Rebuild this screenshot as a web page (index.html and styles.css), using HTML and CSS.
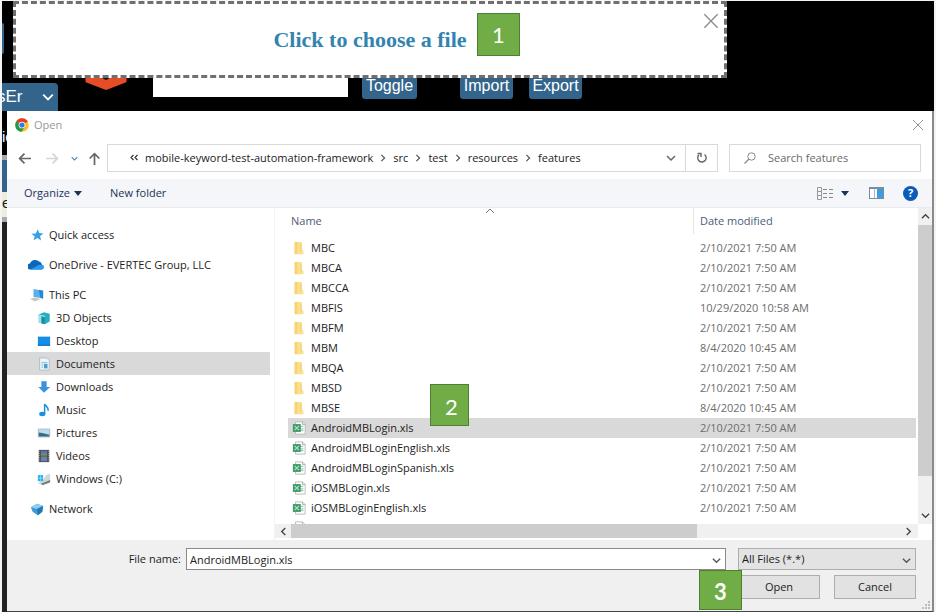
FILE: index.html
```html
<!DOCTYPE html>
<html lang="en">
<head>
<meta charset="utf-8">
<title>Open</title>
<link rel="stylesheet" href="styles.css">
</head>
<body>
<svg class="sprite" aria-hidden="true">
  <symbol id="chev" viewBox="0 0 10 10"><path d="M1 3l4 4 4-4" fill="none" stroke="currentColor" stroke-width="1.5"/></symbol>
  <symbol id="caret" viewBox="0 0 8 5"><path d="M0 0h8L4 5z" fill="currentColor"/></symbol>
  <symbol id="cross" viewBox="0 0 12 12"><path d="M1 1l10 10M11 1L1 11" fill="none" stroke="currentColor"/></symbol>
  <symbol id="arrow" viewBox="0 0 12 12"><path d="M12 6H1.5M6 1.5L1.5 6 6 10.500" fill="none" stroke="currentColor" stroke-width="1.600"/></symbol>
  <symbol id="folder" viewBox="0 0 16 16"><path d="M3 1h8v9l2 1v4H3z" fill="#fadf8c"/><path d="M3 1h3v14H3z" fill="#f7d375"/><path d="M10 3h1v8l-1 1z" fill="#eec763"/></symbol>
  <symbol id="xls" viewBox="0 0 16 16"><path d="M4 1h8l3 3v11H4z" fill="#fff" stroke="#b4b8b6"/><path d="M12 1v3h3" fill="none" stroke="#a9adab"/><path d="M9 6h4M9 9h4M9 11h4" stroke="#6dba91"/><rect x="1" y="3.500" width="9" height="9" fill="#3f9a6b"/><path d="M3 5.500l5 5M8 5.500l-5 5" stroke="#b5dfc8" stroke-width="1.400"/></symbol>
</svg>

<div class="screen">
  <header class="app">
    <span class="sliver"></span>
    <div class="toolbar">
      <label class="env"><select aria-label="Environment"><option>sEr</option></select><svg><use href="#chev"/></svg></label>
      <svg class="logo" viewBox="0 0 46 30"><path d="M0 0h46l-2 22-21 8L2 22z" fill="#e44d26"/><path d="M20 17q3 3 6 0" stroke="#111" stroke-width="2" fill="none"/></svg>
      <input class="query" aria-label="Query">
      <button class="tool toggle">Toggle</button>
      <button class="tool import">Import</button>
      <button class="tool export">Export</button>
    </div>
    <div class="dropzone">
      <a href="#choose">Click to choose a file</a>
      <span class="badge one">1</span>
      <button class="close" aria-label="Close upload"><svg><use href="#cross"/></svg></button>
    </div>
  </header>

  <div class="lower">
    <aside class="strip"><span class="s-text">ie</span><span class="s-gray"></span><span class="s-blue"></span><span class="s-cell">ep</span><span class="s-gray"></span></aside>
    <section class="dialog">
      <div class="titlebar">
        <svg class="chrome" viewBox="0 0 28 28"><circle cx="14" cy="14" r="13.500" fill="#fbc116"/><path d="M14 14L2.300 7.200A13.500 13.500 0 0 1 25.700 7.200z" fill="#e33b2e"/><path d="M2.300 7.200A13.500 13.500 0 0 0 13 27.500L20 17.500 14 14z" fill="#229a4b"/><circle cx="14" cy="14" r="6.700" fill="#fff"/><circle cx="14" cy="14" r="5.200" fill="#3779e4"/></svg>
        <span>Open</span>
        <button class="close" aria-label="Close"><svg><use href="#cross"/></svg></button>
      </div>

      <div class="navrow">
        <button class="nav" aria-label="Back"><svg><use href="#arrow"/></svg></button>
        <button class="nav off" aria-label="Forward"><svg class="flip"><use href="#arrow"/></svg></button>
        <button class="nav recent" aria-label="Recent"><svg><use href="#chev"/></svg></button>
        <button class="nav" aria-label="Up"><svg class="up"><use href="#arrow"/></svg></button>
        <nav class="address">
          <svg class="dbl" viewBox="0 0 8 8"><path d="M3.500 1L1 3.500 3.500 6M7.500 1L5 3.500 7.500 6" fill="none" stroke="#333" stroke-width="1.200"/></svg>
          <a href="#p1">mobile-keyword-test-automation-framework</a><svg class="sep"><use href="#chev"/></svg>
          <a href="#p2">src</a><svg class="sep"><use href="#chev"/></svg>
          <a href="#p3">test</a><svg class="sep"><use href="#chev"/></svg>
          <a href="#p4">resources</a><svg class="sep"><use href="#chev"/></svg>
          <a href="#p5">features</a>
          <button class="drop" aria-label="Previous locations"><svg><use href="#chev"/></svg></button>
          <button class="refresh" aria-label="Refresh"><svg viewBox="0 0 12 12"><path d="M3 2.800A4.200 4.200 0 1 0 8.500 2.500" fill="none" stroke="#666" stroke-width="1.400"/><path d="M1.500 1.500h3.500v3.500" fill="none" stroke="#666" stroke-width="1.400"/></svg></button>
        </nav>
        <label class="search"><svg viewBox="0 0 12 12"><circle cx="7.500" cy="4.500" r="3.700" fill="none" stroke="#888"/><path d="M5 7L.5 11.500" stroke="#888" stroke-width="1.300"/></svg><input type="text" placeholder="Search features" aria-label="Search features"></label>
      </div>

      <div class="commands">
        <button>Organize <svg class="caret"><use href="#caret"/></svg></button>
        <button>New folder</button>
        <button class="views" aria-label="Change view"><svg class="list" viewBox="0 0 17 13"><g fill="none" stroke="#999"><path d="M.5.5h4v12h-4zM.5 4.500h4M.5 8.500h4"/><path d="M6 2.500h4M12 2.500h4M6 6.500h4M12 6.500h4M6 10.500h4M12 10.500h4" stroke="#888"/></g></svg><svg class="caret"><use href="#caret"/></svg></button>
        <button class="preview" aria-label="Preview pane"><svg viewBox="0 0 15 12"><rect x=".5" y=".5" width="14" height="11" fill="#fff" stroke="#7d8c9a"/><path d="M1 1.500h13" stroke="#7d8c9a"/><path d="M5.500 2v9" stroke="#a9bccb"/><path d="M8 2h6v9H8z" fill="#3d9be0"/></svg></button>
        <button class="help" aria-label="Help">?</button>
      </div>

      <div class="body">
        <ul class="tree">
          <li><svg viewBox="0 0 16 16"><path d="M9 1.500l1.500 4.300 5 .4-4 3 1.200 5L8.500 11.500 4 14l1.300-4.600L1.500 6.500l5-.3z" fill="#3aa0e6"/></svg>Quick access</li>
          <li class="gap"><svg class="cloud" viewBox="0 2 16 13"><path d="M2.500 13.500A3 3 0 0 1 2 7.500a5.500 5.500 0 0 1 9-2 4 4 0 0 1 3 3.200 2.500 2.500 0 0 1-.5 4.800z" fill="#0d66bd"/><path d="M2.500 13.500L11 8.700l3.500.2a2.400 2.400 0 0 1-.8 4.600z" fill="#2a9be6"/></svg>OneDrive - EVERTEC Group, LLC</li>
          <li class="gap"><svg viewBox="0 0 16 16"><path d="M4 1l11 2v9L4 10z" fill="#58b0ee"/><path d="M10 2.100l5 .9v9l-3-.5z" fill="#2b86d0"/><path d="M0 12.500l6-2 6 2-6 3z" fill="#cbc8c0"/></svg>This PC</li>
          <li class="sub"><svg viewBox="0 0 16 16"><path d="M2 4l6-2.500L14.500 3v9L9 15l-7-2z" fill="#25aec0"/><path d="M2 4l7 1.500V15l-7-2z" fill="#9ce3ea"/><path d="M5 6l4 1v8l-4-1z" fill="#188b9f"/></svg>3D Objects</li>
          <li class="sub"><svg viewBox="0 0 16 16"><path d="M1 3h14v10.500H1z" fill="#168de5"/><path d="M1 12h14v1.500H1z" fill="#0c78cc"/></svg>Desktop</li>
          <li class="sub selected"><svg viewBox="0 0 16 16"><path d="M3 1h8l3 3v11H3z" fill="#eef5fa" stroke="#a4bdca"/><path d="M5 6.500h7M5 9h2M5 11.500h2" stroke="#70a9c7"/><path d="M8 8h4v5H8z" fill="#4a9ec6"/></svg>Documents</li>
          <li class="sub"><svg viewBox="0 0 16 16"><path d="M5 1.500h6V8h4l-7 6.500L1.500 8H5z" fill="#3c92dd"/></svg>Downloads</li>
          <li class="sub"><svg viewBox="0 0 16 16"><ellipse cx="6" cy="12.500" rx="3.500" ry="2.500" fill="#1591e4"/><path d="M8.700 12.500V1c1 3 5 3 4 8" fill="none" stroke="#1591e4" stroke-width="1.700"/></svg>Music</li>
          <li class="sub"><svg viewBox="0 0 16 16"><path d="M1.500 3.500h13v9h-13z" fill="#b9def2" stroke="#aab6bd"/><path d="M2 7.500l4 .5 8 2v2H2z" fill="#376d80"/></svg>Pictures</li>
          <li class="sub"><svg viewBox="0 0 16 16"><path d="M2 1h12v14H2z" fill="#4d4d50"/><path d="M4.500 2h7v5.500h-7z" fill="#4f74b8"/><path d="M4.500 8.500h7V14h-7z" fill="#6583a8"/><path d="M4.500 5h7v2.500h-7z" fill="#8b8853"/><path d="M3 2v13M13 2v13" stroke="#aaa" stroke-dasharray="1 1.500"/></svg>Videos</li>
          <li class="sub"><svg viewBox="0 0 16 16"><path d="M6 10l5-7 4-1v9l-9 4-5-2z" fill="#d3d6d7"/><path d="M5 13l10-4v3l-9 3z" fill="#777d80"/><path d="M1 3.500h6v7H1z" fill="#26b3ee"/><path d="M4 3v8M1 7h6" stroke="#7fd5f7"/></svg>Windows (C:)</li>
          <li class="gap"><svg viewBox="0 0 16 16"><path d="M1 6l7-4 7 2.500-1 6.500-5 4-6-4z" fill="#3a9bd6"/><path d="M1 6l7 2 7-3.500L8 2z" fill="#8dcdef"/><path d="M8 8l1 7 5-4 1-6.500z" fill="#2177b4"/></svg>Network</li>
        </ul>

        <div class="files">
          <div class="view">
            <svg class="sort" viewBox="0 0 10 10"><path d="M1 7l4-4 4 4" fill="none" stroke="#777"/></svg>
            <table>
              <thead><tr><th class="name">Name</th><th><span>Date modified</span></th></tr></thead>
              <tbody>
                <tr><td><svg><use href="#folder"/></svg>MBC</td><td>2/10/2021 7:50 AM</td></tr>
                <tr><td><svg><use href="#folder"/></svg>MBCA</td><td>2/10/2021 7:50 AM</td></tr>
                <tr><td><svg><use href="#folder"/></svg>MBCCA</td><td>2/10/2021 7:50 AM</td></tr>
                <tr><td><svg><use href="#folder"/></svg>MBFIS</td><td>10/29/2020 10:58 AM</td></tr>
                <tr><td><svg><use href="#folder"/></svg>MBFM</td><td>2/10/2021 7:50 AM</td></tr>
                <tr><td><svg><use href="#folder"/></svg>MBM</td><td>8/4/2020 10:45 AM</td></tr>
                <tr><td><svg><use href="#folder"/></svg>MBQA</td><td>2/10/2021 7:50 AM</td></tr>
                <tr><td><svg><use href="#folder"/></svg>MBSD</td><td>2/10/2021 7:50 AM</td></tr>
                <tr><td><svg><use href="#folder"/></svg>MBSE</td><td>8/4/2020 10:45 AM</td></tr>
                <tr class="selected"><td><svg><use href="#xls"/></svg>AndroidMBLogin.xls<span class="badge two">2</span></td><td>2/10/2021 7:50 AM</td></tr>
                <tr><td><svg><use href="#xls"/></svg>AndroidMBLoginEnglish.xls</td><td>2/10/2021 7:50 AM</td></tr>
                <tr><td><svg><use href="#xls"/></svg>AndroidMBLoginSpanish.xls</td><td>2/10/2021 7:50 AM</td></tr>
                <tr><td><svg><use href="#xls"/></svg>iOSMBLogin.xls</td><td>2/10/2021 7:50 AM</td></tr>
                <tr><td><svg><use href="#xls"/></svg>iOSMBLoginEnglish.xls</td><td>2/10/2021 7:50 AM</td></tr>
                <tr><td><svg><use href="#xls"/></svg></td><td></td></tr>
              </tbody>
            </table>
          </div>
          <div class="vscroll"><svg class="turn"><use href="#chev"/></svg><span class="thumb"></span><svg><use href="#chev"/></svg></div>
          <div class="hscroll"><svg class="left"><use href="#chev"/></svg><span class="thumb"></span><svg class="right"><use href="#chev"/></svg></div>
        </div>
      </div>

      <footer class="footer">
        <label class="fname" for="fname">File name:</label>
        <div class="combo"><input id="fname" type="text" value="AndroidMBLogin.xls"><svg><use href="#chev"/></svg></div>
        <div class="combo type"><select aria-label="File type"><option>All Files (*.*)</option></select><svg><use href="#chev"/></svg></div>
        <div class="actions"><span class="badge three">3</span><button>Open</button><button>Cancel</button></div>
        <svg class="grip" viewBox="0 0 9 9"><path d="M6 0h2v2H6zM3 3h2v2H3zM6 3h2v2H6zM0 6h2v2H0zM3 6h2v2H3zM6 6h2v2H6z" fill="#bbb"/></svg>
      </footer>
    </section>
  </div>
</div>
</body>
</html>
```
FILE: styles.css
```css
* { box-sizing: border-box; }
body { margin: 0; background: #f4f4f4; color: #1c1c1c; font: 11px/16px "Open Sans", "Noto Sans", sans-serif; }
button, input, select { font: inherit; color: inherit; margin: 0; padding: 0; border: 0; background: none; border-radius: 0; }
input, select { appearance: none; outline: 0; min-width: 0; }
a { color: inherit; text-decoration: none; }
svg { display: block; flex: none; }
.sprite { position: absolute; width: 0; height: 0; }
.screen { margin: 1px 2px 0; background: #000; overflow: hidden; }

/* Page behind the dialog */
.app { position: relative; height: 110px; overflow: hidden; }
.sliver { position: absolute; left: 0; top: 22px; width: 2px; height: 31px; background: #33658c; border-radius: 0 3px 3px 0; }
.toolbar { display: flex; align-items: flex-start; padding-top: 60px; font: 17px/24px "Liberation Sans", sans-serif; color: #fff; }
.env { display: flex; align-items: center; width: 56px; height: 28px; margin-top: 22px; margin-right: 25px; background: #33658c; border-radius: 0 4px 0 0; }
.env select { flex: 1; text-indent: -5px; height: 28px; }
.env svg { width: 12px; height: 12px; margin-right: 4px; stroke-width: 2; }
.logo { width: 46px; height: 29px; margin-right: 24px; }
.query { width: 195px; height: 36px; margin-right: 14px; background: #fff; }
.tool { height: 38px; padding-top: 12px; font-size: 16px; line-height: 24px; background: #33658c; border-radius: 3px; }
.toggle { width: 55px; margin-right: 43px; }
.import { width: 53px; margin-right: 16px; }
.export { width: 53px; }
.dropzone { position: absolute; left: 11px; top: 0; width: 77%; max-width: 714px; height: 77px; display: flex; align-items: center; justify-content: center; background: #fff; border: 3px dashed #707070; }
.dropzone a { color: #3284b0; font: bold 22px/24px "Liberation Serif", serif; }
.close { position: absolute; color: #999; }
.dropzone .close { right: 5px; top: 9px; color: #8c8c8c; }
.dropzone .close svg { width: 16px; height: 16px; }
.badge { display: flex; align-items: center; justify-content: center; background: #70ad47; border: 1px solid #507e32; color: #fff; font: 22px/26px Lato, "Open Sans", sans-serif; }
.one { position: absolute; left: 461px; top: 9px; width: 43px; height: 43px; }

.lower { display: flex; }
.strip { width: 5px; overflow: hidden; background: #222; display: flex; flex-direction: column; color: #fff; font: 15px/16px "Liberation Sans", sans-serif; }
.s-text { background: #000; height: 44px; padding-top: 18px; }
.s-gray { height: 5px; background: #aaa; }
.s-blue { height: 32px; background: #33658c; }
.s-cell { height: 25px; padding-top: 3px; background: #eeeedd; color: #222; }
.dialog { flex: 1; min-width: 0; background: #fff; border-right: 2px solid #8a8a8a; border-bottom: 1px solid #444; }

.titlebar { position: relative; display: flex; align-items: center; height: 28px; padding-left: 8px; gap: 5px; color: #999; }
.chrome { width: 14px; height: 14px; }
.titlebar .close { right: 8px; top: 8px; }
.titlebar .close svg { width: 12px; height: 12px; }

.navrow { display: flex; align-items: center; padding: 5px 11px 7px 11px; }
.nav { width: 14px; margin-right: 14px; color: #666; }
.nav svg { width: 13px; height: 13px; }
.nav.off { margin-right: 11px; color: #d5d5d5; }
.nav.recent { margin-right: 7px; width: 10px; color: #4a83b5; }
.nav.recent svg { width: 7px; height: 7px; }
.nav.recent + .nav { margin-right: 5px; }
.flip { transform: rotate(180deg); }
.up { transform: rotate(90deg); }
.address { flex: 1; display: flex; align-items: center; height: 28px; border: 1px solid #d9d9d9; padding-left: 22px; }
.dbl { width: 8px; height: 8px; margin-right: 7px; }
.sep { width: 8px; height: 8px; margin: 0 6px; color: #555; transform: rotate(-90deg); }
.drop { margin-left: auto; padding: 0 9px; color: #666; }
.drop svg { width: 10px; height: 10px; }
.refresh { align-self: stretch; width: 32px; padding-left: 10px; border-left: 1px solid #d9d9d9; }
.refresh svg { width: 12px; height: 12px; }
.search { display: flex; align-items: center; width: 192px; height: 28px; margin-left: 11px; padding-left: 14px; gap: 12px; border: 1px solid #d9d9d9; }
.search svg { width: 12px; height: 12px; }
.search input { flex: 1; }
.search input::placeholder { color: #6b6b6b; opacity: 1; }

.commands { display: flex; align-items: center; height: 29px; padding: 0 14px 0 17px; background: #f4f6f9; border-bottom: 1px solid #e9ecef; color: #1e3358; }
.commands button { display: flex; align-items: center; gap: 4px; margin-right: 28px; }
.caret { width: 8px; height: 5px; }
.commands .views { margin-left: auto; margin-right: 20px; gap: 7px; }
.list { width: 17px; height: 13px; }
.commands .preview { margin-right: 19px; }
.preview svg { width: 15px; height: 12px; }
.commands .help { justify-content: center; width: 15px; height: 15px; margin: 0; border-radius: 50%; background: #0b5cb8; color: #fff; font-weight: 700; }

.body { display: flex; }
.tree { width: 268px; margin: 0; padding: 15px 4px 0 0; list-style: none; border-right: 1px solid #f3f3f3; }
.tree li { display: flex; align-items: center; gap: 5px; height: 23px; padding-left: 23px; }
.tree svg { width: 14px; height: 14px; }
.tree .cloud { width: 16px; height: 13px; margin-left: -2px; }
.tree .sub { padding-left: 30px; }
.tree .gap { margin-top: 7px; }
.selected { background: #d9d9d9; }
.files { flex: 1; min-width: 0; display: grid; grid-template: 316px 14px 2px / 1fr 14px; }
.view { position: relative; overflow: hidden; padding: 0 2px 0 13px; }
.sort { position: absolute; left: 210px; top: -2px; width: 10px; height: 10px; }
table { width: 100%; border-collapse: collapse; table-layout: fixed; }
th { height: 30px; padding: 0 0 4px; text-align: left; font-weight: 400; color: #4c5b7c; }
th.name { width: 405px; padding-left: 3px; }
th span { display: block; padding: 5px 0 5px 6px; border-left: 1px solid #e5e5e5; }
td { height: 20px; padding: 0 0 0 7px; color: #6d6d6d; }
td:first-child { position: relative; display: flex; align-items: center; gap: 5px; padding-left: 4px; color: #1c1c1c; }
td svg { width: 14px; height: 14px; }
.two { position: absolute; left: 142px; top: -34px; width: 39px; height: 42px; padding: 4px 0 0 4px; }
.vscroll { display: flex; flex-direction: column; align-items: center; justify-content: space-between; background: #f0f0f0; padding: 4px 0; }
.vscroll svg, .hscroll svg { width: 9px; height: 9px; color: #444; }
.turn { transform: rotate(180deg); }
.vscroll .thumb { width: 14px; height: 251px; margin-top: 4px; margin-bottom: auto; background: #cdcdcd; }
.hscroll { display: flex; align-items: center; padding: 0 5px 0 4px; background: #f0f0f0; }
.hscroll .thumb { flex: none; width: 64%; height: 14px; margin-left: 3px; margin-right: auto; background: #cdcdcd; }
.left { transform: rotate(90deg); }
.right { transform: rotate(-90deg); }

.footer { position: relative; display: grid; grid-template-columns: 174px 1fr 178px; row-gap: 5px; padding: 8px 16px 12px 0; background: #f0f0f0; }
.fname { text-align: right; line-height: 22px; }
.combo { position: relative; margin-left: 5px; height: 22px; border: 1px solid #8a8a8a; background: #fff; }
.combo input, .combo select { width: 100%; height: 20px; padding-left: 3px; }
.combo svg { position: absolute; right: 4px; top: 7px; width: 9px; height: 9px; color: #555; pointer-events: none; }
.combo.type { margin-left: 0; background: #e3e3e3; border-color: #adadad; }
.footer .combo:not(.type) { margin-right: 12px; }
.actions { position: relative; grid-column: 3; display: flex; justify-content: space-between; }
.actions button { width: 82px; height: 24px; background: #e2e2e2; border: 1px solid #adadad; }
.three { position: absolute; left: -39px; top: -5px; width: 43px; height: 40px; padding-top: 4px; font-weight: 700; }
.grip { position: absolute; right: 1px; bottom: 1px; width: 9px; height: 9px; }
```
